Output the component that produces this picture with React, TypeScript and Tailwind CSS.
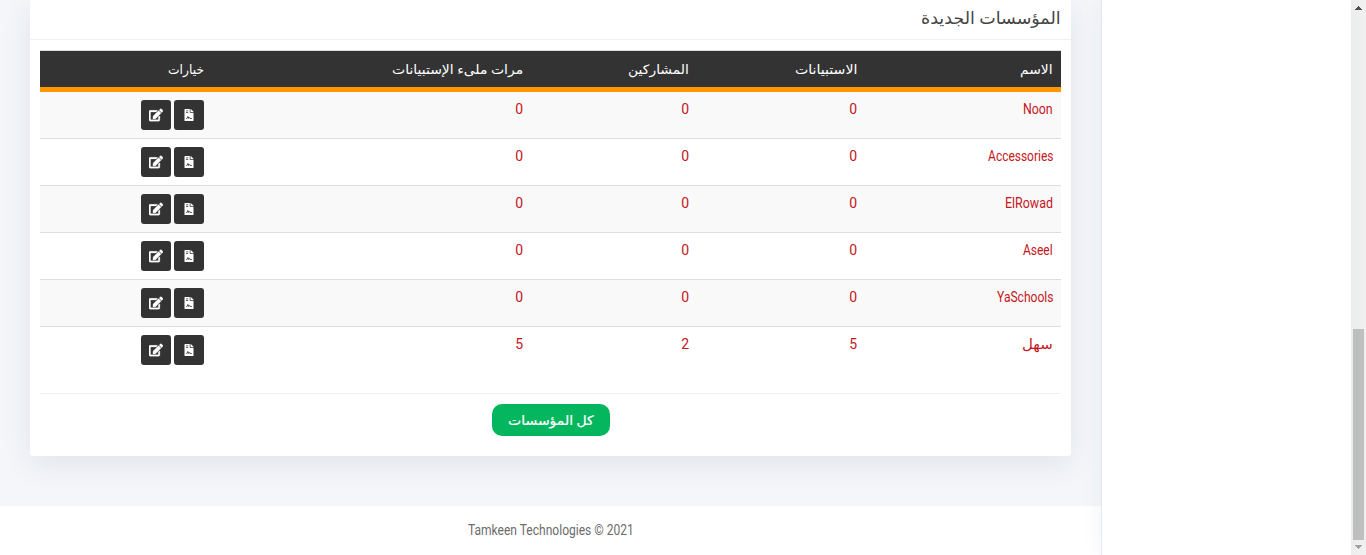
import { useLayoutEffect, useRef, useState } from "react";
import type { ReactNode } from "react";
import { FaEdit, FaFileContract } from "react-icons/fa";

type FitProps = { width: number; children: ReactNode };

/* Keeps a label at a fixed measure, whatever font is available. */
function Fit({ width, children }: FitProps) {
  const ref = useRef<HTMLSpanElement>(null);
  const [scale, setScale] = useState(1);
  useLayoutEffect(() => {
    if (ref.current) setScale(width / ref.current.offsetWidth);
  }, [width]);
  return (
    <span className="inline-flex justify-start whitespace-nowrap align-top" style={{ width }}>
      <span ref={ref} className="inline-block shrink-0 origin-right" style={{ transform: `scaleX(${scale})` }}>
        {children}
      </span>
    </span>
  );
}

const columns = "grid grid-cols-[196px_168px_166px_319px_172px]";

const headers = [
  { label: "الاسم", width: 33 },
  { label: "الاستبيانات", width: 62 },
  { label: "المشاركين", width: 61 },
  { label: "مرات ملىء الإستبيانات", width: 131 },
  { label: "خيارات", width: 36 },
];

const rows = [
  { name: "Noon", width: 30, values: [0, 0, 0] },
  { name: "Accessories", width: 65, values: [0, 0, 0] },
  { name: "ElRowad", width: 48, values: [0, 0, 0] },
  { name: "Aseel", width: 30, values: [0, 0, 0] },
  { name: "YaSchools", width: 56, values: [0, 0, 0] },
  { name: "سهل", width: 31, values: [5, 2, 5] },
];

function Action({ children }: { children: ReactNode }) {
  return (
    <button className="flex size-[30px] items-center justify-center rounded-[3px] bg-[#333] text-white">
      {children}
    </button>
  );
}

function Scrollbar() {
  return (
    <div className="flex w-[15px] shrink-0 flex-col items-center bg-[#f1f1f1]">
      <svg className="mt-[5px] h-[6px] w-[7px]" viewBox="0 0 7 6" shapeRendering="crispEdges">
        <path d="M3 1h1v1h1v1h1v1h1v1H0V4h1V3h1V2h1z" fill="#505050" />
      </svg>
      <div className="mt-[318px] h-[211px] w-[11px] bg-[#c1c1c1]" />
      <svg className="mt-[5px] h-[4px] w-[7px]" viewBox="0 0 7 4" shapeRendering="crispEdges">
        <path d="M0 0h7v1H6v1H5v1H4v1H3V3H2V2H1V1H0z" fill="#a3a3a3" />
      </svg>
    </div>
  );
}

export default function App() {
  return (
    <div className="flex h-[555px] w-[1366px] overflow-hidden bg-white font-['Roboto','DejaVu_Sans',sans-serif] text-[13px]">
      <div dir="rtl" className="flex w-[1101px] shrink-0 flex-col bg-[#f4f6fa]">
        <main className="h-[506px] px-[30px]">
          <section className="h-[456px] w-[1041px] rounded-b-[3px] bg-white shadow-[0_8px_30px_rgba(31,45,61,0.09)]">
            <h2 className="h-10 border-b border-[#f1f1f1] px-[10px] pt-[6px] text-[17px] leading-6 text-[#444]">
              <Fit width={140}>المؤسسات الجديدة</Fit>
            </h2>
            <div className="px-[10px] pt-[10px]">
              <div className={`${columns} h-[42px] border-t border-b-[5px] border-t-[#ddd] border-b-[#ff9800] bg-[#333] text-white`}>
                {headers.map((h) => (
                  <div key={h.label} className="px-2 pt-[9px] leading-5">
                    <Fit width={h.width}>{h.label}</Fit>
                  </div>
                ))}
              </div>
              {rows.map((row) => (
                <div key={row.name} className={`${columns} h-[47px] border-b border-[#ddd] text-[14px] text-[#c4161c] odd:bg-white even:bg-[#f9f9f9] last:border-transparent`}>
                  <div className="px-2 pt-[7px] leading-5">
                    <Fit width={row.width}>{row.name}</Fit>
                  </div>
                  {row.values.map((v, i) => (
                    <div key={i} className="px-2 pt-[7px] leading-5">
                      <Fit width={8}>{v}</Fit>
                    </div>
                  ))}
                  <div className="flex gap-[3px] px-2 pt-2">
                    <Action><FaFileContract className="size-3" /></Action>
                    <Action><FaEdit className="size-[14px]" stroke="white" strokeWidth="12" /></Action>
                  </div>
                </div>
              ))}
            </div>
            <div className="mx-[10px] mt-[19px] flex justify-center border-t border-[#f1f1f1] pt-[10px]">
              <button className="flex h-8 w-[118px] items-center justify-center rounded-[10px] bg-[#04b65e] pt-px leading-5 text-white [-webkit-text-stroke:0.2px_white]">
                <Fit width={86}>كل المؤسسات</Fit>
              </button>
            </div>
          </section>
        </main>
        <footer dir="ltr" className="flex h-[49px] justify-center bg-white pt-[14px] text-[14px] leading-5 text-[#6c6c6c]">
          <span dir="rtl"><Fit width={166}><bdi dir="ltr">Tamkeen Technologies © 2021</bdi></Fit></span>
        </footer>
      </div>
      <aside className="relative w-[250px] shrink-0 border-l border-[#e4e9f0] bg-white shadow-[0_0_20px_rgba(31,45,61,0.06)]" />
      <Scrollbar />
    </div>
  );
}
